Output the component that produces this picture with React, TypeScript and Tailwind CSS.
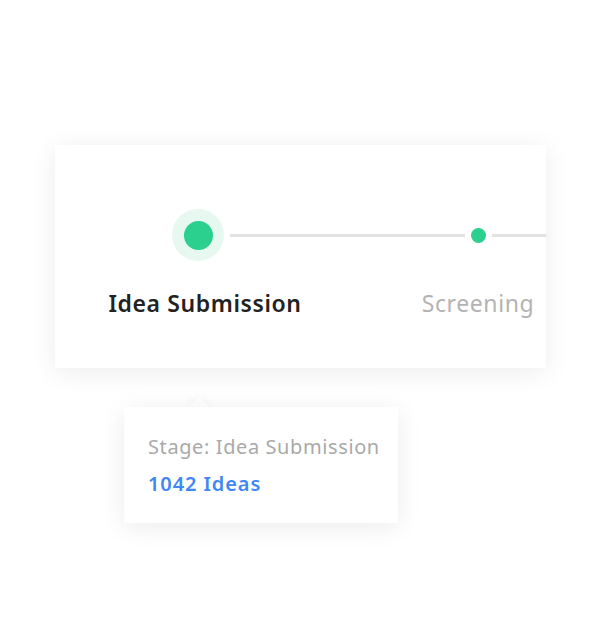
import React from "react";

export default function App() {
  return (
    <div className="w-[600px] h-[640px] bg-white relative" style={{ fontFamily: '"Noto Sans", "Open Sans", sans-serif' }}>
      <div className="pt-[145px] pl-[55px]">
        <div className="w-[491px] h-[223px] bg-white overflow-hidden shadow-[0_4px_24px_rgba(0,0,0,0.08)]">
          <div className="flex pt-[64px] pl-[3px]">
            <div className="w-[280px] flex flex-col items-center shrink-0">
              <div className="flex items-center w-full">
                <div className="flex-1" />
                <div className="w-[52px] h-[52px] rounded-full bg-[#e6f8f0] flex items-center justify-center mx-[6px]">
                  <div className="w-[29px] h-[29px] rounded-full bg-[#2bd08f]" />
                </div>
                <div className="flex-1 h-[3px] bg-[#e2e2e2]" />
              </div>
              <div className="mt-[28px] ml-[14px] text-[23px] leading-[28px] tracking-[0.6px] font-semibold text-[#222222] whitespace-nowrap">Idea Submission</div>
            </div>
            <div className="w-[280px] flex flex-col items-center shrink-0">
              <div className="flex items-center w-full h-[52px]">
                <div className="flex-1 h-[3px] bg-[#e2e2e2]" />
                <div className="w-[15px] h-[15px] rounded-full bg-[#2bd08f] mx-[6px]" />
                <div className="flex-1 h-[3px] bg-[#e2e2e2]" />
              </div>
              <div className="mt-[28px] text-[23px] leading-[28px] tracking-[0.6px] text-[#b3b3b3] whitespace-nowrap">Screening</div>
            </div>
          </div>
        </div>
      </div>
      <div className="pl-[124px] pt-[39px]">
        <div className="relative w-[274px] h-[116px]">
          <div className="absolute left-[67px] top-[-7px] w-[16px] h-[16px] bg-white rotate-45 shadow-[0_0_12px_rgba(0,0,0,0.06)]" />
          <div className="relative w-full h-full bg-white shadow-[0_4px_24px_rgba(0,0,0,0.08)] pl-[24px] pt-[26px]">
            <div className="text-[20px] leading-[28px] tracking-[0.6px] text-[#a9a9a9] whitespace-nowrap">Stage: Idea Submission</div>
            <div className="mt-[9px] text-[20px] leading-[28px] tracking-[0.9px] font-semibold text-[#3f87f5] whitespace-nowrap">1042 Ideas</div>
          </div>
        </div>
      </div>
    </div>
  );
}
